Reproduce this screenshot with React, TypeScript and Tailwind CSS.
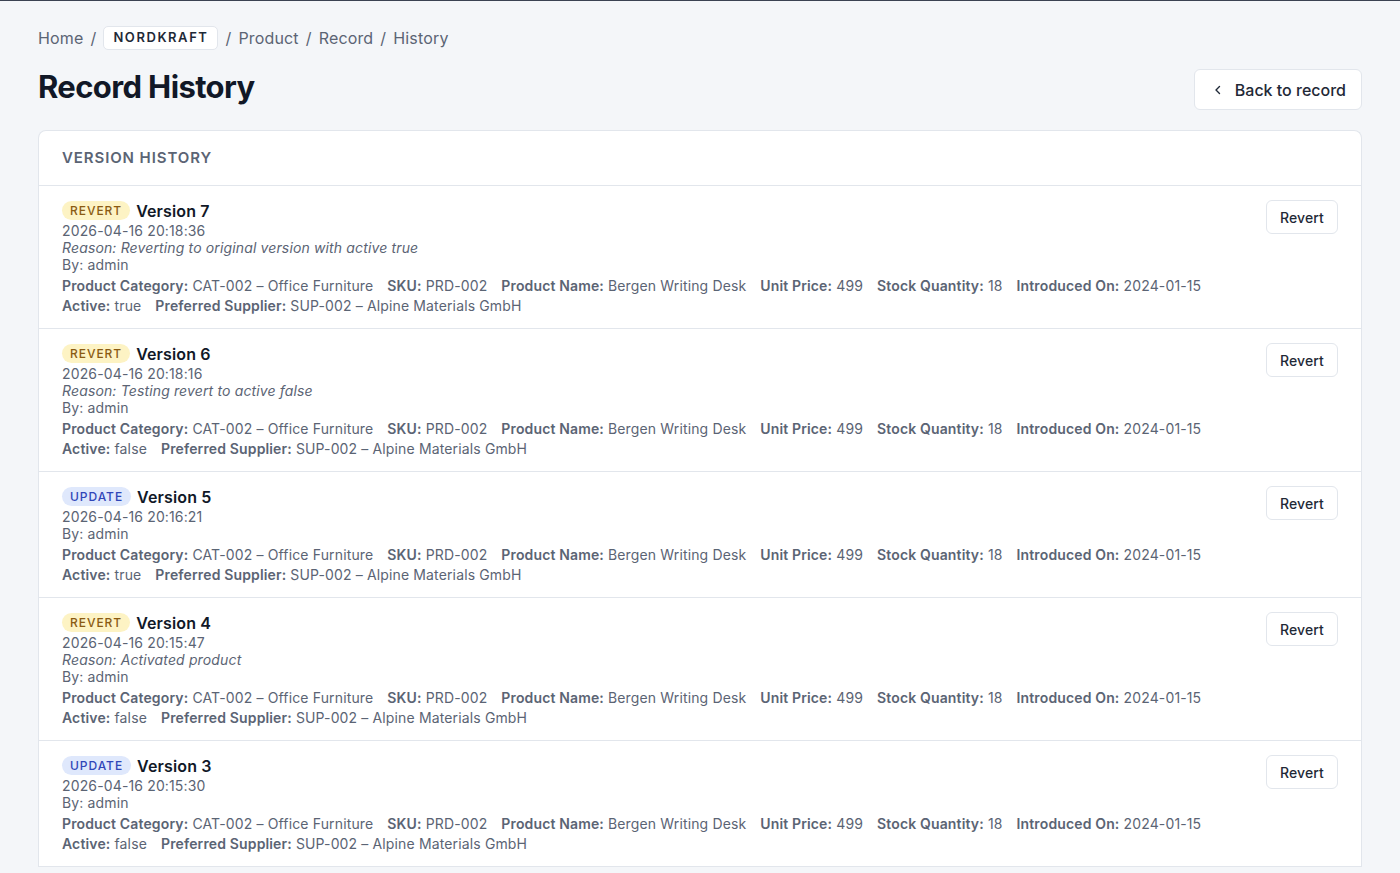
import React from "react";

type V = { type: "REVERT" | "UPDATE"; n: number; date: string; reason?: string; active: string };
const versions: V[] = [
  { type: "REVERT", n: 7, date: "2026-04-16 20:18:36", reason: "Reverting to original version with active true", active: "true" },
  { type: "REVERT", n: 6, date: "2026-04-16 20:18:16", reason: "Testing revert to active false", active: "false" },
  { type: "UPDATE", n: 5, date: "2026-04-16 20:16:21", active: "true" },
  { type: "REVERT", n: 4, date: "2026-04-16 20:15:47", reason: "Activated product", active: "false" },
  { type: "UPDATE", n: 3, date: "2026-04-16 20:15:30", active: "false" },
];

function F({ k, v }: { k: string; v: string }) {
  return (
    <span className="mr-[14px]">
      <span className="font-semibold">{k}:</span> {v}
    </span>
  );
}

export default function App() {
  return (
    <div className="min-h-[873px] bg-[#f4f6f9] border-t border-[#3b4252] text-[#111827]" style={{ fontFamily: "Inter, 'Noto Sans', sans-serif" }}>
      <div className="px-[38px] pt-[25px]">
        <div className="flex items-center gap-[7px] text-[16px] text-[#5b6474] tracking-[0.01em]">
          <span>Home</span><span>/</span>
          <span className="bg-white border border-[#e2e6ec] rounded-[5px] px-[9px] py-[1px] text-[13px] font-semibold tracking-[0.12em] text-[#1f2937]">NORDKRAFT</span>
          <span>/</span><span>Product</span><span>/</span><span>Record</span><span>/</span><span>History</span>
        </div>
        <div className="flex items-center justify-between mt-[11px]">
          <h1 className="text-[31px] font-bold tracking-[-0.02em] leading-[40px] mt-[3px]">Record History</h1>
          <button className="flex items-center gap-[12px] bg-white border border-[#e2e6ec] rounded-[6px] h-[41px] pl-[18px] pr-[15px] text-[16px] font-medium text-[#1f2937] mt-[8px]">
            <svg width="10" height="10" viewBox="0 0 10 10" fill="none" stroke="#1f2937" strokeWidth="1.4" strokeLinecap="round" strokeLinejoin="round"><path d="M6.5 1.5 3 5l3.5 3.5" /></svg>
            Back to record
          </button>
        </div>
        <div className="mt-[20px] bg-white border border-[#e2e6ec] rounded-t-[8px] border-b-0">
          <div className="h-[55px] flex items-center px-[23px] text-[15px] font-semibold tracking-[0.06em] text-[#5b6474] border-b border-[#e2e6ec]">VERSION HISTORY</div>
          {versions.map((v) => (
            <div key={v.n} className="flex justify-between px-[23px] pt-[14px] pb-[12px] border-b border-[#e2e6ec] text-[#5b6474] text-[14px] tracking-[0.01em]">
              <div>
                <div className="flex items-center gap-[6px] h-[21px]">
                  <span className={"rounded-full px-[8px] text-[12px] font-medium tracking-[0.08em] leading-[19px] " + (v.type === "REVERT" ? "bg-[#fdf3c4] text-[#8a5a12]" : "bg-[#dfe8fc] text-[#3046b8]")}>{v.type}</span>
                  <span className="text-[16px] font-semibold text-[#111827]">Version {v.n}</span>
                </div>
                <div className="leading-[17px] mt-[1px]">{v.date}</div>
                {v.reason && <div className="leading-[17px] italic">Reason: {v.reason}</div>}
                <div className="leading-[17px]">By: admin</div>
                <div className="leading-[20px] mt-[3px]">
                  <F k="Product Category" v="CAT-002 – Office Furniture" />
                  <F k="SKU" v="PRD-002" />
                  <F k="Product Name" v="Bergen Writing Desk" />
                  <F k="Unit Price" v="499" />
                  <F k="Stock Quantity" v="18" />
                  <F k="Introduced On" v="2024-01-15" />
                </div>
                <div className="leading-[20px]">
                  <F k="Active" v={v.active} />
                  <F k="Preferred Supplier" v="SUP-002 – Alpine Materials GmbH" />
                </div>
              </div>
              <div>
                <button className="bg-white border border-[#e2e6ec] rounded-[6px] h-[34px] px-[13px] text-[14px] font-medium text-[#1f2937]">Revert</button>
              </div>
            </div>
          ))}
        </div>
      </div>
    </div>
  );
}
